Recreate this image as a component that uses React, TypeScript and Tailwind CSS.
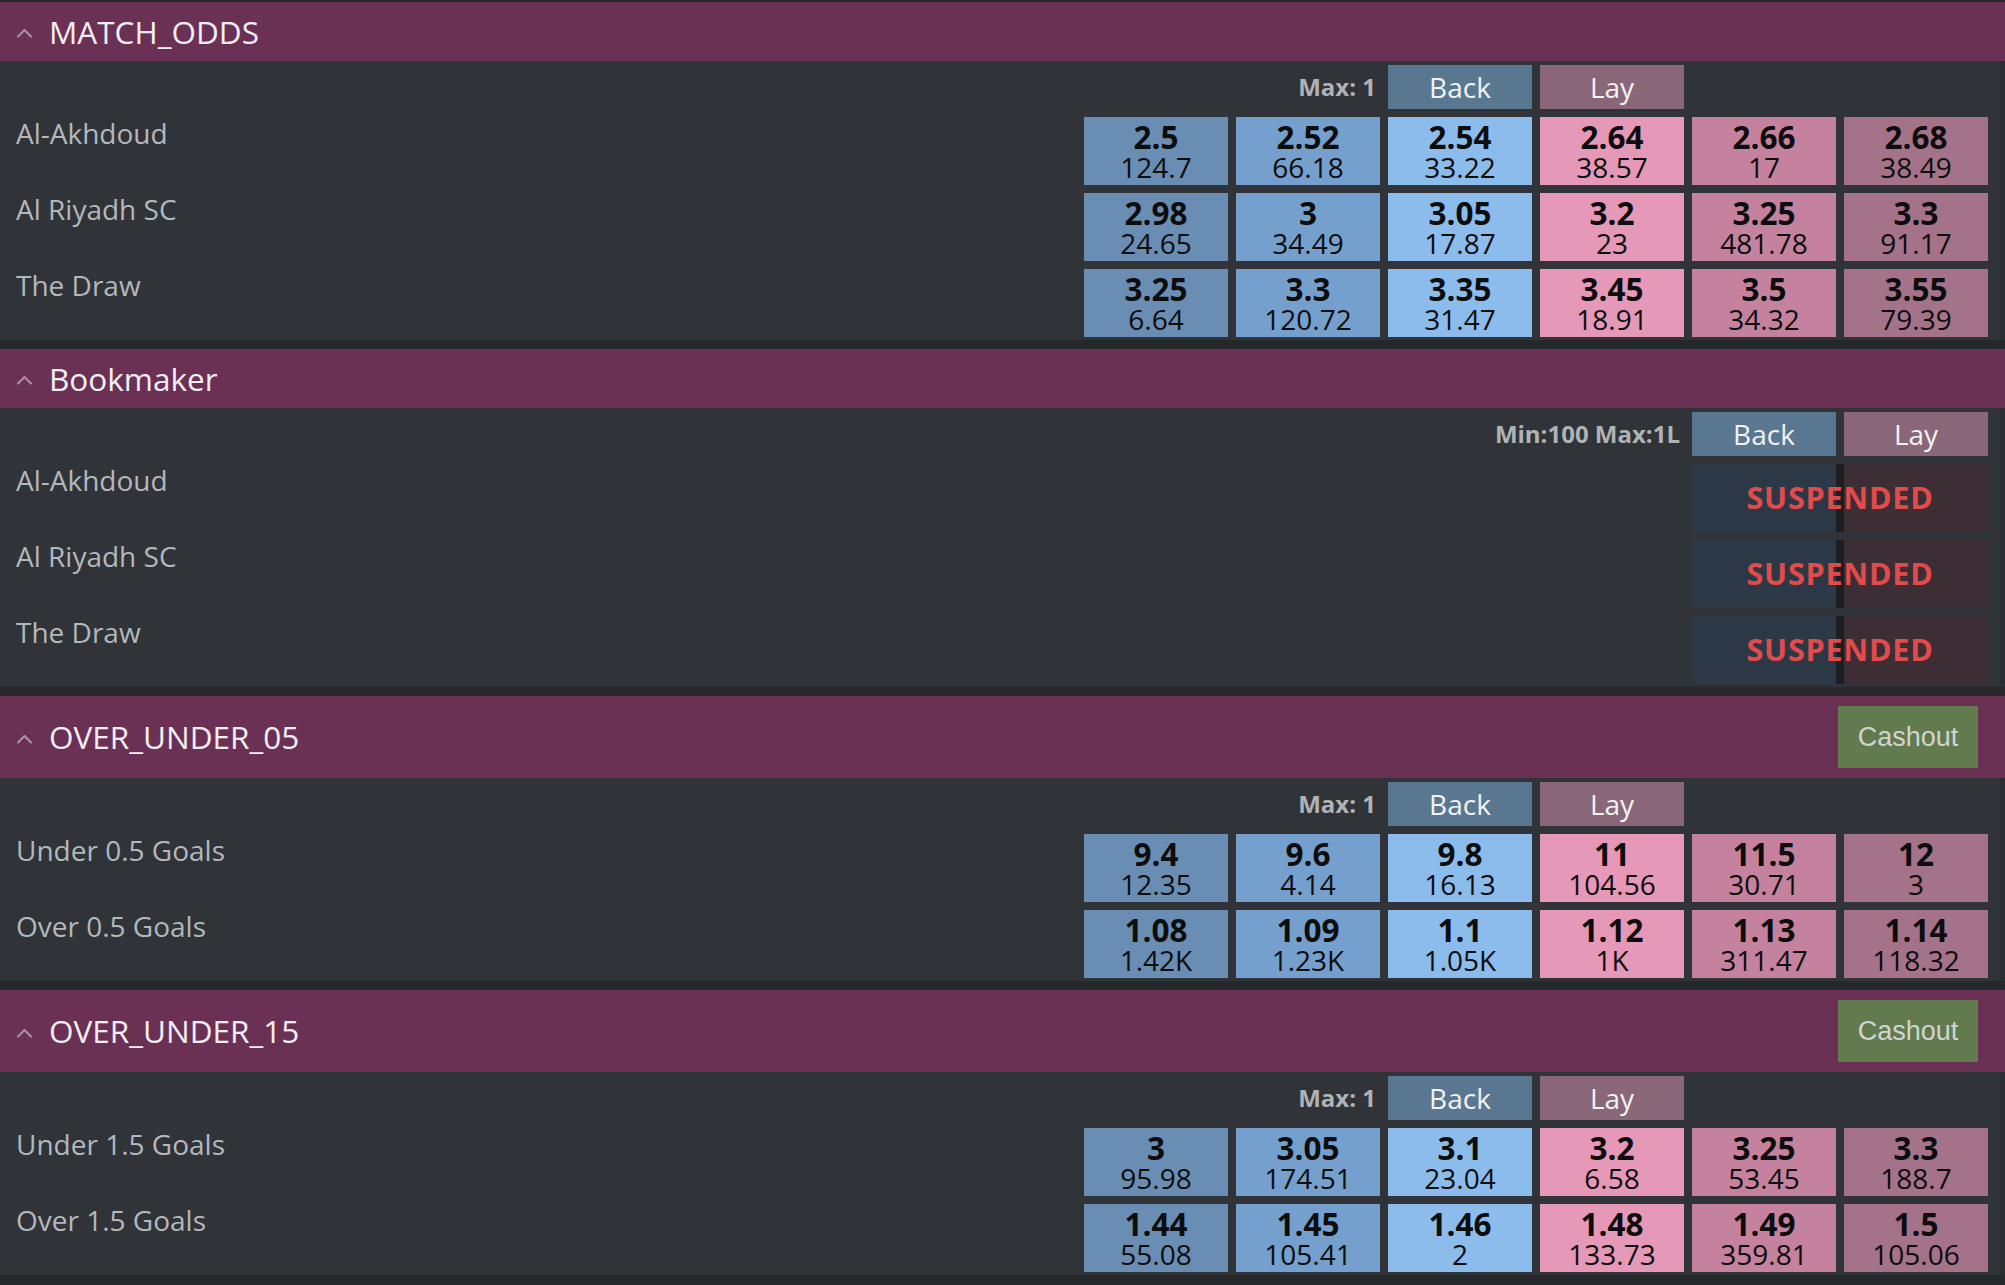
import React from 'react';

type Cell = { odds: string; size: string };
type Runner = { name: string; cells?: Cell[] };
type Market = {
  title: string;
  kind: 'odds' | 'bookmaker';
  limit: string;
  cashout?: boolean;
  runners: Runner[];
};

const c = (odds: string, size: string): Cell => ({ odds, size });

const MARKETS: Market[] = [
  {
    title: 'MATCH_ODDS',
    kind: 'odds',
    limit: 'Max: 1',
    runners: [
      { name: 'Al-Akhdoud', cells: [c('2.5', '124.7'), c('2.52', '66.18'), c('2.54', '33.22'), c('2.64', '38.57'), c('2.66', '17'), c('2.68', '38.49')] },
      { name: 'Al Riyadh SC', cells: [c('2.98', '24.65'), c('3', '34.49'), c('3.05', '17.87'), c('3.2', '23'), c('3.25', '481.78'), c('3.3', '91.17')] },
      { name: 'The Draw', cells: [c('3.25', '6.64'), c('3.3', '120.72'), c('3.35', '31.47'), c('3.45', '18.91'), c('3.5', '34.32'), c('3.55', '79.39')] },
    ],
  },
  {
    title: 'Bookmaker',
    kind: 'bookmaker',
    limit: 'Min:100 Max:1L',
    runners: [{ name: 'Al-Akhdoud' }, { name: 'Al Riyadh SC' }, { name: 'The Draw' }],
  },
  {
    title: 'OVER_UNDER_05',
    kind: 'odds',
    limit: 'Max: 1',
    cashout: true,
    runners: [
      { name: 'Under 0.5 Goals', cells: [c('9.4', '12.35'), c('9.6', '4.14'), c('9.8', '16.13'), c('11', '104.56'), c('11.5', '30.71'), c('12', '3')] },
      { name: 'Over 0.5 Goals', cells: [c('1.08', '1.42K'), c('1.09', '1.23K'), c('1.1', '1.05K'), c('1.12', '1K'), c('1.13', '311.47'), c('1.14', '118.32')] },
    ],
  },
  {
    title: 'OVER_UNDER_15',
    kind: 'odds',
    limit: 'Max: 1',
    cashout: true,
    runners: [
      { name: 'Under 1.5 Goals', cells: [c('3', '95.98'), c('3.05', '174.51'), c('3.1', '23.04'), c('3.2', '6.58'), c('3.25', '53.45'), c('3.3', '188.7')] },
      { name: 'Over 1.5 Goals', cells: [c('1.44', '55.08'), c('1.45', '105.41'), c('1.46', '2'), c('1.48', '133.73'), c('1.49', '359.81'), c('1.5', '105.06')] },
    ],
  },
];

// back (light -> best) then lay (best -> deeper)
const CELL_BG = ['bg-[#6a8db3]', 'bg-[#75a0cd]', 'bg-[#8bbcec]', 'bg-[#e598b8]', 'bg-[#c4829f]', 'bg-[#a47389]'];

const Chevron = () => (
  <svg width="17" height="10" viewBox="0 0 17 10" className="shrink-0 mt-[3px]">
    <polyline points="2,8.5 8.5,2 15,8.5" fill="none" stroke="#a896a6" strokeWidth="2" strokeLinecap="round" strokeLinejoin="round" />
  </svg>
);

const Header: React.FC<{ title: string; cashout?: boolean }> = ({ title, cashout }) => (
  <div className={`flex items-center bg-[#6a3155] pl-4 ${cashout ? 'h-[82px] pr-[27px]' : 'h-[59px]'}`}>
    <Chevron />
    <span className="ml-4 text-[31.5px] text-[#f3eef2] leading-none">{title}</span>
    {cashout && (
      <button className="ml-auto w-[140px] h-[62px] bg-[#617b4f] text-[#d2d4cf] text-[27px] font-['Liberation_Sans',Arial,sans-serif]">
        Cashout
      </button>
    )}
  </div>
);

const RunnerName: React.FC<{ name: string }> = ({ name }) => (
  <div className="text-[28px] leading-[32px] text-[#b3b8bd] whitespace-nowrap">{name}</div>
);

const OddsBox: React.FC<{ cell: Cell; idx: number }> = ({ cell, idx }) => (
  <div className={`${CELL_BG[idx]} h-[68px] flex flex-col items-center justify-center text-[#0d0d0d]`}>
    <span className="text-[31.5px] font-bold leading-[31px] mt-[1px]">{cell.odds}</span>
    <span className="text-[28px] leading-[31px]">{cell.size}</span>
  </div>
);

const ColHead: React.FC<{ label: string; lay?: boolean }> = ({ label, lay }) => (
  <div className={`h-[44px] flex items-center justify-center text-[28px] text-[#f2f2f2] ${lay ? 'bg-[#8a6778]' : 'bg-[#5a7792]'}`}>
    {label}
  </div>
);

const Limit: React.FC<{ text: string; span: string }> = ({ text, span }) => (
  <div className={`${span} flex items-center justify-end pr-1 text-[24px] font-bold text-[#b0b3b6]`}>{text}</div>
);

const Suspended = () => (
  <div className="col-span-2 relative h-[68px] grid grid-cols-[144px_8px_144px]">
    <div className="bg-[#2c3846]" />
    <div className="bg-[#1c1e21]" />
    <div className="bg-[#3d2e36]" />
    <div className="absolute inset-0 flex items-center justify-center text-[30.5px] font-bold tracking-[0.8px] text-[#e14b4b]">
      SUSPENDED
    </div>
  </div>
);

const MarketBlock: React.FC<{ m: Market }> = ({ m }) => (
  <div>
    <Header title={m.title} cashout={m.cashout} />
    <div className="bg-[#303338] pl-4 pr-[12px] border-r-[5px] border-[#2a2d31] pt-1 pb-[3px]">
      <div className="grid grid-cols-[1fr_repeat(6,144px)] gap-2">
        {m.kind === 'odds' ? (
          <>
            <div />
            <Limit text={m.limit} span="col-span-2" />
            <ColHead label="Back" />
            <ColHead label="Lay" lay />
            <div className="col-span-2" />
          </>
        ) : (
          <>
            <Limit text={m.limit} span="col-span-5" />
            <ColHead label="Back" />
            <ColHead label="Lay" lay />
          </>
        )}
        {m.runners.map((r) => (
          <React.Fragment key={r.name}>
            <div className={m.kind === 'bookmaker' ? 'col-span-5' : ''}>
              <RunnerName name={r.name} />
            </div>
            {m.kind === 'odds' && r.cells
              ? r.cells.map((cell, i) => <OddsBox key={i} cell={cell} idx={i} />)
              : <Suspended />}
          </React.Fragment>
        ))}
      </div>
    </div>
  </div>
);

export default function App() {
  return (
    <div className="min-h-screen w-full bg-[#25282b] pt-[2px] font-['Open_Sans','Noto_Sans',sans-serif]">
      <div className="flex flex-col gap-[9px]">
        {MARKETS.map((m) => (
          <MarketBlock key={m.title} m={m} />
        ))}
      </div>
    </div>
  );
}
